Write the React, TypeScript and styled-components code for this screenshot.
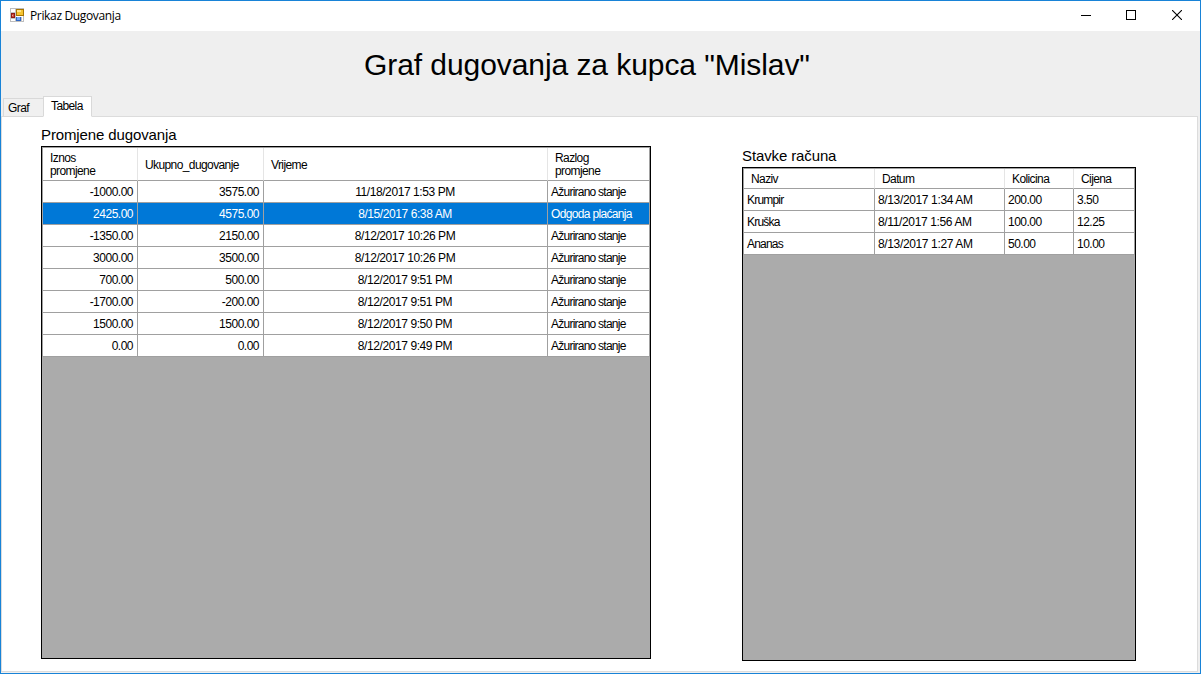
import React from "react";
import styled, { createGlobalStyle } from "styled-components";

const GlobalStyle = createGlobalStyle`
  * { box-sizing: border-box; }
  body { margin: 0; background: #fff; }
`;

const Window = styled.div`
  width: 1201px;
  height: 674px;
  display: flex;
  flex-direction: column;
  overflow: hidden;
  border: 1px solid #1883d7;
  background: #efefef;
  color: #000;
  font-family: "Liberation Sans", Arial, sans-serif;
  font-size: 12px;
  white-space: nowrap;
`;

const TitleBar = styled.header`
  display: flex;
  align-items: center;
  height: 30px;
  flex: none;
  padding-left: 9px;
  background: #fff;
`;

const Caption = styled.span`
  flex: 1;
  margin-left: 4px;
  font-family: "Open Sans", "Noto Sans", sans-serif;
  font-size: 12px;
  line-height: 28px;
  letter-spacing: -0.35px;
`;

const WindowButton = styled.button`
  display: flex;
  align-items: center;
  justify-content: center;
  width: 46px;
  height: 28px;
  margin: 0;
  padding: 0 0 2px;
  border: 0;
  background: none;
`;

const Heading = styled.h1`
  height: 65px;
  flex: none;
  margin: 0 0 0 363px;
  padding-top: 14px;
  font-size: 30px;
  line-height: 40px;
  font-weight: 400;
  letter-spacing: -0.07px;
`;

const TabStrip = styled.nav`
  display: flex;
  align-items: flex-end;
  height: 21px;
  flex: none;
  margin-bottom: -1px;
  padding-left: 2px;
`;

const Tab = styled.div<{ $active?: boolean }>`
  z-index: ${(p) => (p.$active ? 1 : 0)};
  width: ${(p) => (p.$active ? 49 : 40)}px;
  height: ${(p) => (p.$active ? 21 : 19)}px;
  padding-left: ${(p) => (p.$active ? 7 : 4)}px;
  border: 1px solid #d9d9d9;
  border-right-width: ${(p) => (p.$active ? 1 : 0)}px;
  border-bottom-color: ${(p) => (p.$active ? "#fff" : "#d9d9d9")};
  background: ${(p) => (p.$active ? "#fff" : "#f0f0f0")};
  line-height: 18px;
  letter-spacing: -0.6px;
`;

const TabPage = styled.main`
  display: flex;
  align-items: flex-start;
  gap: 91px;
  flex: 1;
  margin: 0 2px 1px 0;
  padding-left: 39px;
  border: 1px solid #dcdcdc;
  background: #fff;
`;

const Section = styled.section<{ $top: number; $width: number }>`
  width: ${(p) => p.$width}px;
  padding-top: ${(p) => p.$top}px;
`;

const SectionTitle = styled.h2`
  height: 20px;
  margin: 0;
  font-size: 15px;
  line-height: 18px;
  font-weight: 400;
  letter-spacing: -0.12px;
`;

const Grid = styled.div<{ $height: number }>`
  height: ${(p) => p.$height}px;
  border: 1px solid #000;
  background: #ababab;
`;

const Table = styled.div`
  border-top: 1px solid #a0a0a0;
  border-left: 1px solid #a0a0a0;
`;

const Row = styled.div<{ $columns: string; $selected?: boolean }>`
  display: grid;
  grid-template-columns: ${(p) => p.$columns};
  height: 22px;
  background: ${(p) => (p.$selected ? "#0078d7" : "#fff")};
  color: ${(p) => (p.$selected ? "#fff" : "#000")};
`;

const HeaderRow = styled(Row)<{ $height: number }>`
  height: ${(p) => p.$height}px;
`;

const HeaderCell = styled.div<{ $top?: number }>`
  display: flex;
  align-items: center;
  padding: ${(p) => p.$top ?? 1}px 0 0 7px;
  border-right: 1px solid #e5e5e5;
  border-bottom: 1px solid #a0a0a0;
  line-height: 13px;
  letter-spacing: -0.6px;
  white-space: pre;
  &:last-child { border-right-color: #a0a0a0; }
`;

const Cell = styled.div<{ $align?: string; $track?: number }>`
  padding: 1px 4px 0 3px;
  border-right: 1px solid #a0a0a0;
  border-bottom: 1px solid #a0a0a0;
  line-height: 20px;
  text-align: ${(p) => p.$align ?? "left"};
  letter-spacing: ${(p) => p.$track ?? -0.5}px;
`;

const DEBT_COLUMNS = "95px 126px 284px 102px";
const ITEM_COLUMNS = "131px 130px 69px 61px";

const debts = [
  ["-1000.00", "3575.00", "11/18/2017 1:53 PM", "Ažurirano stanje"],
  ["2425.00", "4575.00", "8/15/2017 6:38 AM", "Odgoda plaćanja"],
  ["-1350.00", "2150.00", "8/12/2017 10:26 PM", "Ažurirano stanje"],
  ["3000.00", "3500.00", "8/12/2017 10:26 PM", "Ažurirano stanje"],
  ["700.00", "500.00", "8/12/2017 9:51 PM", "Ažurirano stanje"],
  ["-1700.00", "-200.00", "8/12/2017 9:51 PM", "Ažurirano stanje"],
  ["1500.00", "1500.00", "8/12/2017 9:50 PM", "Ažurirano stanje"],
  ["0.00", "0.00", "8/12/2017 9:49 PM", "Ažurirano stanje"],
];

const items = [
  ["Krumpir", "8/13/2017 1:34 AM", "200.00", "3.50"],
  ["Kruška", "8/11/2017 1:56 AM", "100.00", "12.25"],
  ["Ananas", "8/13/2017 1:27 AM", "50.00", "10.00"],
];

function FormIcon() {
  return (
    <svg width="16" height="16" viewBox="0 0 16 16" shapeRendering="crispEdges">
      <path d="M0.5 0.5h13v13h-13z" fill="#fff" stroke="#bdbdbd" />
      <path d="M5.5 1v13M0 4.5h5M0 10.5h5M11.5 9v5" stroke="#c4c4c4" />
      <rect x="6" y="1" width="8" height="7" fill="#a87500" />
      <rect x="7" y="2" width="6" height="5" fill="#f5c431" />
      <rect x="7" y="2" width="4" height="2" fill="#ffe48a" />
      <rect x="1" y="5" width="4" height="5" fill="#8e1a14" />
      <rect x="2" y="6" width="2" height="3" fill="#cf4a3c" />
      <rect x="2" y="7" width="1" height="1" fill="#eda090" />
      <rect x="6" y="9" width="5" height="4" fill="#2f66c4" />
      <rect x="7" y="9" width="3" height="3" fill="#78aaf2" />
    </svg>
  );
}

export default function App() {
  return (
    <Window>
      <GlobalStyle />
      <TitleBar>
        <FormIcon />
        <Caption>Prikaz Dugovanja</Caption>
        <WindowButton aria-label="Minimize">
          <svg width="12" height="10" shapeRendering="crispEdges"><path d="M2 5.5h10" stroke="#000" /></svg>
        </WindowButton>
        <WindowButton aria-label="Maximize">
          <svg width="10" height="10" shapeRendering="crispEdges"><path d="M.5 .5h9v9h-9z" fill="none" stroke="#000" /></svg>
        </WindowButton>
        <WindowButton aria-label="Close">
          <svg width="10" height="10"><path d="M0 0l10 10M10 0L0 10" stroke="#000" strokeWidth="1.1" /></svg>
        </WindowButton>
      </TitleBar>
      <Heading>Graf dugovanja za kupca "Mislav"</Heading>
      <TabStrip>
        <Tab>Graf</Tab>
        <Tab $active>Tabela</Tab>
      </TabStrip>
      <TabPage>
        <Section $top={9} $width={610}>
          <SectionTitle>Promjene dugovanja</SectionTitle>
          <Grid $height={513}>
            <Table>
              <HeaderRow $columns={DEBT_COLUMNS} $height={33}>
                <HeaderCell>{"Iznos\npromjene"}</HeaderCell>
                <HeaderCell $top={3}>Ukupno_dugovanje</HeaderCell>
                <HeaderCell $top={3}>Vrijeme</HeaderCell>
                <HeaderCell>{"Razlog\npromjene"}</HeaderCell>
              </HeaderRow>
              {debts.map((d, i) => (
                <Row key={i} $columns={DEBT_COLUMNS} $selected={i === 1}>
                  <Cell $align="right">{d[0]}</Cell>
                  <Cell $align="right">{d[1]}</Cell>
                  <Cell $align="center" $track={-0.42}>{d[2]}</Cell>
                  <Cell $track={i === 1 ? -0.66 : -0.76}>{d[3]}</Cell>
                </Row>
              ))}
            </Table>
          </Grid>
        </Section>
        <Section $top={30} $width={394}>
          <SectionTitle>Stavke računa</SectionTitle>
          <Grid $height={494}>
            <Table>
              <HeaderRow $columns={ITEM_COLUMNS} $height={20}>
                <HeaderCell>Naziv</HeaderCell>
                <HeaderCell>Datum</HeaderCell>
                <HeaderCell>Kolicina</HeaderCell>
                <HeaderCell>Cijena</HeaderCell>
              </HeaderRow>
              {items.map((r) => (
                <Row key={r[0]} $columns={ITEM_COLUMNS}>
                  <Cell $track={-0.8}>{r[0]}</Cell>
                  <Cell $track={-0.36}>{r[1]}</Cell>
                  <Cell>{r[2]}</Cell>
                  <Cell>{r[3]}</Cell>
                </Row>
              ))}
            </Table>
          </Grid>
        </Section>
      </TabPage>
    </Window>
  );
}
